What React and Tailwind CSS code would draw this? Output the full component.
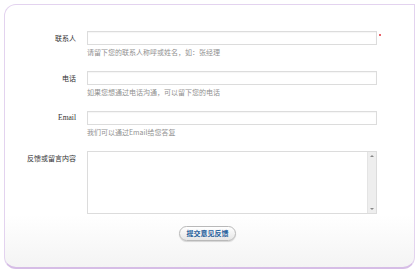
import React from "react";

const font = { fontFamily: '"Noto Sans CJK SC", "Liberation Sans", sans-serif' };

function Row({ label, hint, star, serif }) {
  return (
    <div className="flex items-start">
      <div
        className="w-[71px] shrink-0 text-right text-[7px] leading-[14px] text-[#333]"
        style={serif ? { fontFamily: '"Liberation Serif", serif', fontSize: "7.5px" } : undefined}
      >
        {label}
      </div>
      <div className="ml-[11px] flex flex-col">
        <div className="flex items-start">
          <div className="h-[14px] w-[290px] border border-[#dcdcdc] bg-white shadow-[inset_0_1px_1px_rgba(0,0,0,0.04)]" />
          {star && <span className="ml-[2px] mt-[3px] h-[2px] w-[2px] rounded-full bg-[#e0303a]" />}
        </div>
        <div className="mt-[2px] h-[10px] text-[7px] leading-[10px] text-[#919191]">{hint}</div>
      </div>
    </div>
  );
}

export default function App() {
  return (
    <div className="h-[272px] w-[419px] bg-white pl-[4px] pt-[4px]" style={font}>
      <div className="relative h-[265px] w-[411px] overflow-hidden rounded-tl-[12px] rounded-bl-[12px] rounded-br-[12px] border border-[#e3d3ef] border-b-[#d6bde6] border-b-2 bg-gradient-to-b from-white from-[80%] to-[#f4f4f4]">
        <div className="flex flex-col pt-[26px]">
          <div className="flex flex-col gap-[14px]">
            <Row label="联系人" hint="请留下您的联系人称呼或姓名，如：张经理" star />
            <Row label="电话" hint="如果您想通过电话沟通，可以留下您的电话" />
            <Row label="Email" hint="我们可以通过Email给您答复" serif />
          </div>
          <div className="mt-[14px] flex items-start">
            <div className="w-[71px] shrink-0 text-right text-[7px] leading-[14px] text-[#333]">反馈或留言内容</div>
            <div className="ml-[11px] flex h-[63px] w-[290px] border border-[#dcdcdc] bg-white">
              <div className="flex-1" />
              <div className="flex w-[9px] flex-col items-center justify-between border-l border-[#e4e4e4] bg-[#eeeeee] py-[3px]">
                <span className="h-0 w-0 border-x-[2px] border-b-[2px] border-x-transparent border-b-[#888]" />
                <span className="h-0 w-0 border-x-[2px] border-t-[2px] border-x-transparent border-t-[#888]" />
              </div>
            </div>
          </div>
          <div className="mt-[12px] flex justify-center pr-[4px]">
            <button className="flex h-[15px] w-[57px] items-center justify-center rounded-full border border-[#b9b9b9] bg-gradient-to-b from-white to-[#e6e6e6] text-[7px] font-bold text-[#1f5f9c] shadow-[0_1px_1px_rgba(0,0,0,0.15)]">
              提交意见反馈
            </button>
          </div>
        </div>
      </div>
    </div>
  );
}
